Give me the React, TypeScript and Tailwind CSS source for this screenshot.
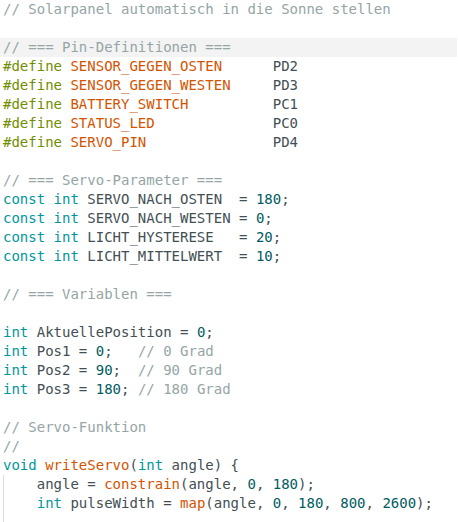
type Tok = [string, string]

const c = {
  text: "text-[#434f54]",
  comment: "text-[#95a5a6]",
  define: "text-[#728e00]",
  macro: "text-[#d35400]",
  kw: "text-[#00979c]",
  num: "text-[#005c5f]",
  fn: "text-[#d35400]",
}

const lines: Tok[][] = [
  [[c.comment, "// Solarpanel automatisch in die Sonne stellen"]],
  [],
  [[c.comment, "// === Pin-Definitionen ==="]],
  [[c.define, "#define "], [c.macro, "SENSOR_GEGEN_OSTEN"], [c.text, "      PD2"]],
  [[c.define, "#define "], [c.macro, "SENSOR_GEGEN_WESTEN"], [c.text, "     PD3"]],
  [[c.define, "#define "], [c.macro, "BATTERY_SWITCH"], [c.text, "          PC1"]],
  [[c.define, "#define "], [c.macro, "STATUS_LED"], [c.text, "              PC0"]],
  [[c.define, "#define "], [c.macro, "SERVO_PIN"], [c.text, "               PD4"]],
  [],
  [[c.comment, "// === Servo-Parameter ==="]],
  [[c.kw, "const int"], [c.text, " SERVO_NACH_OSTEN  = "], [c.num, "180"], [c.text, ";"]],
  [[c.kw, "const int"], [c.text, " SERVO_NACH_WESTEN = "], [c.num, "0"], [c.text, ";"]],
  [[c.kw, "const int"], [c.text, " LICHT_HYSTERESE   = "], [c.num, "20"], [c.text, ";"]],
  [[c.kw, "const int"], [c.text, " LICHT_MITTELWERT  = "], [c.num, "10"], [c.text, ";"]],
  [],
  [[c.comment, "// === Variablen ==="]],
  [],
  [[c.kw, "int"], [c.text, " AktuellePosition = "], [c.num, "0"], [c.text, ";"]],
  [[c.kw, "int"], [c.text, " Pos1 = "], [c.num, "0"], [c.text, ";   "], [c.comment, "// 0 Grad"]],
  [[c.kw, "int"], [c.text, " Pos2 = "], [c.num, "90"], [c.text, ";  "], [c.comment, "// 90 Grad"]],
  [[c.kw, "int"], [c.text, " Pos3 = "], [c.num, "180"], [c.text, "; "], [c.comment, "// 180 Grad"]],
  [],
  [[c.comment, "// Servo-Funktion"]],
  [[c.comment, "//"]],
  [[c.kw, "void"], [c.text, " "], [c.fn, "writeServo"], [c.text, "("], [c.kw, "int"], [c.text, " angle) {"]],
]

const body: Tok[][] = [
  [[c.text, "    angle = "], [c.fn, "constrain"], [c.text, "(angle, "], [c.num, "0"], [c.text, ", "], [c.num, "180"], [c.text, ");"]],
  [
    [c.text, "    "],
    [c.kw, "int"],
    [c.text, " pulseWidth = "],
    [c.fn, "map"],
    [c.text, "(angle, "],
    [c.num, "0"],
    [c.text, ", "],
    [c.num, "180"],
    [c.text, ", "],
    [c.num, "800"],
    [c.text, ", "],
    [c.num, "2600"],
    [c.text, ");"],
  ],
  [],
]

const Line = ({ toks, active }: { toks: Tok[]; active?: boolean }) => (
  <div className={`h-[19px] pl-[3px] leading-[19px] whitespace-pre ${active ? "bg-[#f3f3f3]" : ""}`}>
    {toks.map(([cls, t], i) => (
      <span key={i} className={cls}>
        {t}
      </span>
    ))}
  </div>
)

export default function App() {
  return (
    <div className="h-[522px] w-[458px] overflow-hidden bg-white font-['DejaVu_Sans_Mono',monospace] text-[14px]">
      <div className="w-[457px]">
        {lines.map((toks, i) => (
          <Line key={i} toks={toks} active={i === 2} />
        ))}
        <div className="relative">
          <span className="absolute top-0 bottom-0 left-[3px] w-px bg-[#dcdcdc]" />
          {body.map((toks, i) => (
            <Line key={i} toks={toks} />
          ))}
        </div>
      </div>
    </div>
  )
}
